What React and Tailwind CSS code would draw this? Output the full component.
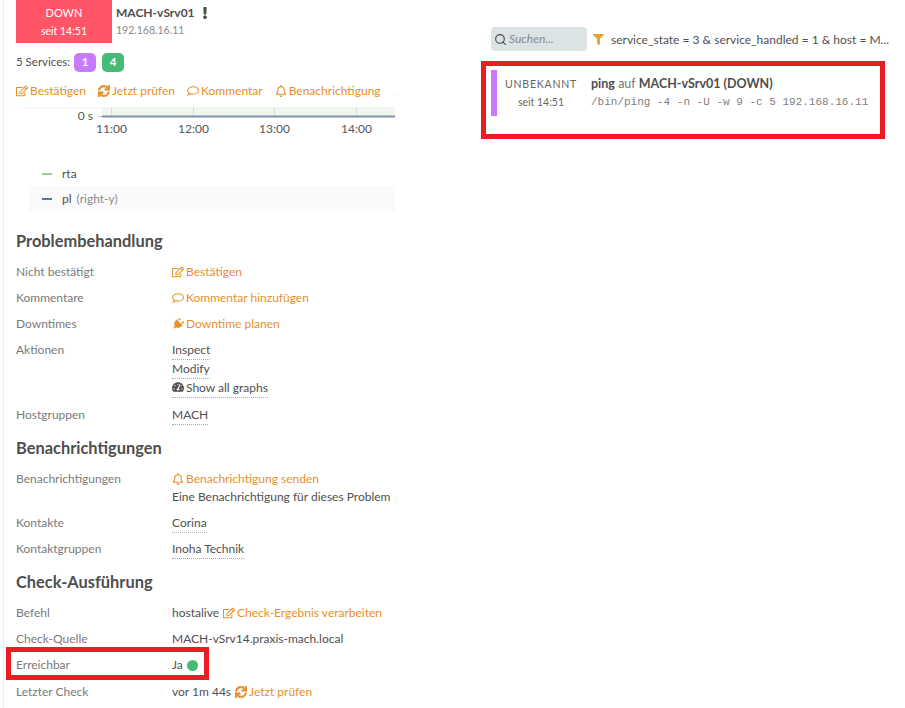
import { FaRegEdit, FaSync, FaRegBell, FaPlug, FaTachometerAlt, FaFilter, FaExclamation } from 'react-icons/fa'
import { Search } from 'lucide-react'

const ORANGE = 'text-[#e88f2a]'

function CommentIcon({ className = '' }) {
  return (
    <svg viewBox="0 0 13 12" className={className} fill="none" stroke="currentColor" strokeWidth="1.1">
      <path d="M7 1.5c3 0 5.4 1.7 5.4 3.9S10 9.3 7 9.3c-.9 0-1.7-.1-2.4-.4-.9.8-2 1.3-3.6 1.5.8-.8 1.3-1.6 1.4-2.5C1.3 7.200.6 6.400.6 5.400.6 3.200 4 1.500 7 1.500z" />
    </svg>
  )
}

function Action({ icon: Icon, children, iconClass = '' }) {
  return (
    <span className={`flex items-center whitespace-nowrap ${ORANGE}`}>
      <Icon className={`mr-[2px] h-3 w-3 shrink-0 ${iconClass}`} />
      {children}
    </span>
  )
}

function Dotted({ children, last }) {
  return <span className={`block h-[19px] border-b border-dotted border-[#a9a9a9] leading-[18px] ${last ? '-mb-px' : ''}`}>{children}</span>
}

function Row({ label, children, boxed }) {
  return (
    <div className="relative flex py-1 leading-[18px]">
      <div className="w-[156px] shrink-0 text-[#7a7a7a]">{label}</div>
      <div className="flex min-w-0 flex-col items-start whitespace-nowrap">{children}</div>
      {boxed && <div className="absolute top-[-5px] bottom-[-2px] left-[-10px] w-[203px] border-[5px] border-[#ed1c24]" />}
    </div>
  )
}

function Heading({ children }) {
  return <h2 className="mt-[10px] mb-[8px] h-5 text-[16.4px] leading-5 font-bold text-[#4e4e4e]">{children}</h2>
}

function Chart() {
  const ticks = [
    ['11:00', 107.5],
    ['12:00', 189.5],
    ['13:00', 270.5],
    ['14:00', 352.5],
  ]
  return (
    <svg width="395" height="34" className="block" style={{ fontFamily: 'Lato, sans-serif' }}>
      <rect x="98" y="0" width="297" height="9" fill="#f0f5ef" />
      {ticks.map(([t, x]) => (
        <g key={t}>
          <line x1={x} x2={x} y1="0" y2="9" stroke="#d8ddd8" />
          <text x={x} y="26" textAnchor="middle" fontSize="12" fill="#555">{t}</text>
        </g>
      ))}
      <text x="89" y="13" textAnchor="end" fontSize="12" fill="#555">0 s</text>
      <line x1="94" x2="98" y1="9.5" y2="9.5" stroke="#bbb" />
      <line x1="98" x2="395" y1="9.5" y2="9.5" stroke="#7f93ac" strokeWidth="2" />
    </svg>
  )
}

export default function App() {
  return (
    <div className="flex h-[708px] w-[905px] overflow-hidden bg-white font-['Lato',sans-serif] text-[12px] text-[#505050]">
      <div className="ml-[3px] h-full w-[392px] shrink-0 overflow-hidden border-l border-[#ececec] pl-3">
        <div className="flex gap-1">
          <div className="flex h-[43px] w-24 shrink-0 flex-col items-center bg-[#ff5566] pt-[4px] text-white">
            <div className="text-[11px] leading-[18px]">DOWN</div>
            <div className="text-[10.5px] leading-[18px]">seit 14:51</div>
          </div>
          <div className="pt-[4px]">
            <div className="flex items-center leading-[18px] font-bold text-[#4e4e4e]">
              MACH-vSrv01
              <FaExclamation className="ml-[4px] h-3 w-3" />
            </div>
            <div className="text-[10.5px] leading-[16px] text-[#8a8a8a]">192.168.16.11</div>
          </div>
        </div>

        <div className="mt-[9px] flex h-5 items-center whitespace-nowrap text-[11.5px]">
          5 Services:
          <span className="ml-[4px] flex h-[19px] w-[22px] items-center justify-center rounded-[5px] bg-[#c77bfa] text-[11.5px] font-bold text-white">1</span>
          <span className="ml-1.5 flex h-[19px] w-[22px] items-center justify-center rounded-[5px] bg-[#44bb77] text-[11.5px] font-bold text-white">4</span>
        </div>

        <div className="mt-[10px] flex h-[25px] items-start gap-3 pb-[7px] leading-[18px] shadow-[0_1px_2px_rgba(0,0,0,0.04)]">
          <Action icon={FaRegEdit}>Bestätigen</Action>
          <Action icon={FaSync} iconClass="stroke-[24px]">Jetzt prüfen</Action>
          <Action icon={CommentIcon}>Kommentar</Action>
          <Action icon={FaRegBell}>Benachrichtigung</Action>
          <FaPlug className={`mt-[3px] h-3 w-3 shrink-0 rotate-45 ${ORANGE}`} />
        </div>

        <div className="-ml-3">
          <Chart />
        </div>

        <div className="mt-[20px] ml-[13px] flex h-[25px] items-center px-[13px] leading-[18px]">
          <span className="mr-[10px] h-[2px] w-[10px] bg-[#9ccb93]" />
          rta
        </div>
        <div className="ml-[13px] flex h-[25px] items-center bg-[#fafafa] px-[13px] leading-[18px]">
          <span className="mr-[10px] h-[2px] w-[10px] bg-[#4d7ba8]" />
          pl
          <span className="ml-[5px] text-[#8a8a8a]">(right-y)</span>
        </div>

        <div className="pt-[10px]">
          <Heading>Problembehandlung</Heading>
          <Row label="Nicht bestätigt"><Action icon={FaRegEdit}>Bestätigen</Action></Row>
          <Row label="Kommentare"><Action icon={CommentIcon}>Kommentar hinzufügen</Action></Row>
          <Row label="Downtimes"><Action icon={FaPlug} iconClass="rotate-45">Downtime planen</Action></Row>
          <Row label="Aktionen">
            <Dotted>Inspect</Dotted>
            <Dotted>Modify</Dotted>
            <Dotted><FaTachometerAlt className="mr-[2px] inline h-3 w-3 align-[-1px]" />Show all graphs</Dotted>
          </Row>
          <Row label="Hostgruppen"><Dotted last>MACH</Dotted></Row>

          <Heading>Benachrichtigungen</Heading>
          <Row label="Benachrichtigungen">
            <Action icon={FaRegBell}>Benachrichtigung senden</Action>
            <div>Eine Benachrichtigung für dieses Problem</div>
          </Row>
          <Row label="Kontakte"><Dotted last>Corina</Dotted></Row>
          <Row label="Kontaktgruppen"><Dotted last>Inoha Technik</Dotted></Row>

          <Heading>Check-Ausführung</Heading>
          <Row label="Befehl">
            <div className="flex gap-[4px]">hostalive <Action icon={FaRegEdit}>Check-Ergebnis verarbeiten</Action></div>
          </Row>
          <Row label="Check-Quelle">MACH-vSrv14.praxis-mach.local</Row>
          <Row label="Erreichbar" boxed>
            <span className="flex items-center">Ja<span className="ml-[4px] h-[11px] w-[11px] rounded-full bg-[#44bb77]" /></span>
          </Row>
          <div className="pt-px">
            <Row label="Letzter Check">
              <div className="flex gap-[4px]">vor 1m 44s <Action icon={FaSync} iconClass="stroke-[24px]">Jetzt prüfen</Action></div>
            </Row>
          </div>
        </div>
      </div>

      <div className="ml-[86px] w-[404px] pt-[27px]">
        <div className="ml-[10px] flex h-6 items-center">
          <div className="flex h-6 w-24 shrink-0 items-center rounded bg-[#dbe3e5] pl-[3px] text-[12px] text-[#8a8a8a] italic">
            <Search className="mr-[2px] h-[13px] w-[13px] text-[#444]" strokeWidth={2} />
            Suchen...
          </div>
          <FaFilter className="ml-[6px] h-[11px] w-[11px] shrink-0 text-[#e9a02c]" />
          <span className="ml-[7px] pt-[1px] whitespace-nowrap">service_state = 3 &amp; service_handled = 1 &amp; host = M...</span>
        </div>
        <div className="mt-[10px] h-[78px] w-[404px] border-[5px] border-[#ed1c24] pt-[4px] pl-[5px]">
          <div className="flex">
            <div className="h-[46px] w-1.5 bg-[#c77bfa]" />
            <div className="w-[88px] pt-[5px] text-center leading-[18px] text-[#666]">
              <div className="text-[10.5px] tracking-[.8px]">UNBEKANNT</div>
              <div className="text-[10.5px]">seit 14:51</div>
            </div>
            <div className="pl-[6px] pt-[5px] leading-[18px]">
              <div className="text-[12.5px]"><b className="text-[#4e4e4e]">ping</b> <span className="text-[#777]">auf</span> <b className="text-[#4e4e4e]">MACH-vSrv01 (DOWN)</b></div>
              <div className="font-['Liberation_Mono',monospace] text-[11px] text-[#808080]">/bin/ping -4 -n -U -w 9 -c 5 192.168.16.11</div>
            </div>
          </div>
        </div>
      </div>
    </div>
  )
}
